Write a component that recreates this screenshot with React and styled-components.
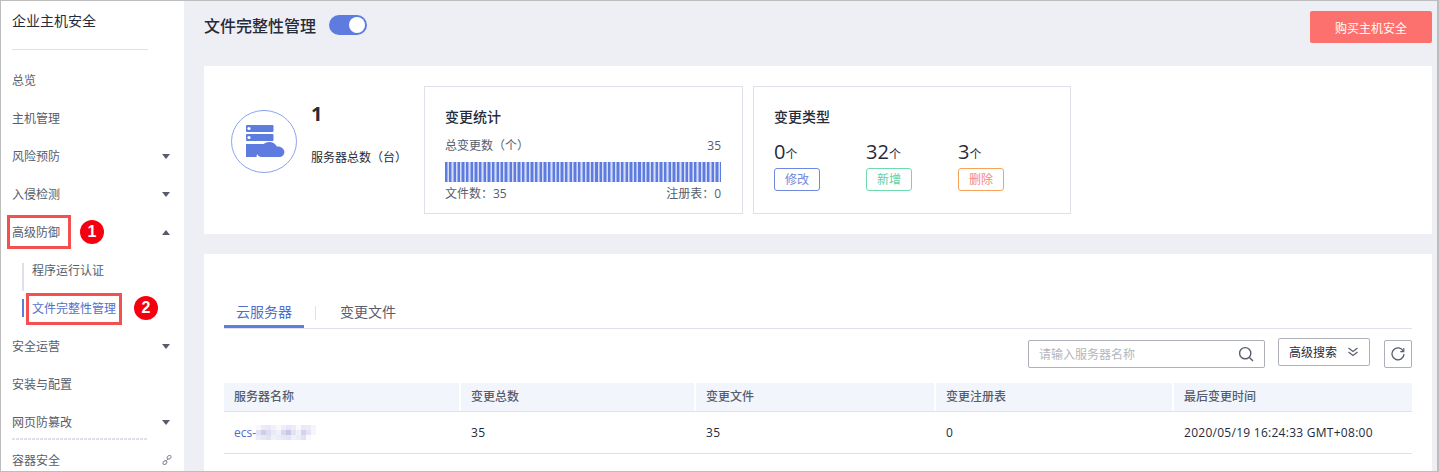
import React from "react";
import styled, { createGlobalStyle } from "styled-components";

const Global = createGlobalStyle`
  html, body { margin: 0; padding: 0; background: #fff; }
  body { font-family: "Open Sans", "Noto Sans CJK SC", sans-serif; font-size: 12px; color: #252b3a; }
  * { box-sizing: border-box; }
`;
const Frame = styled.div`
  position: relative; width: 1439px; height: 472px; border: 1px solid #bdbdbd; border-right-width: 2px; display: flex; overflow: hidden; background: #eeeff5;
`;
const Sidebar = styled.nav`
  width: 183px; flex: none; background: #fff; padding: 0 11px; display: flex; flex-direction: column; overflow: hidden;
`;
const Brand = styled.div`
  flex: none; height: 49px; padding-top: 10px; line-height: 20px; font-size: 14px; color: #252b3a; border-bottom: 1px solid #dfe1e8; width: 136px; margin-bottom: 11px;
`;
const MenuItem = styled.div`
  flex: none; height: 38px; display: flex; align-items: center; justify-content: space-between; padding-right: 3px; font-size: 12px; color: #575d6c; position: relative;
`;
const Caret = styled.span`
  width: 0; height: 0; border-left: 4px solid transparent; border-right: 4px solid transparent;
  ${p => p.$up ? "border-bottom: 5px solid #575d6c;" : "border-top: 5px solid #575d6c;"}
`;
const SubItem = styled.div`
  flex: none; height: 38px; margin-left: 10px; display: flex; align-items: center;
  padding-left: 10px; color: ${p => p.$active ? "#526ecc" : "#575d6c"}; position: relative;
  &::before {
    content: ""; position: absolute; left: 0; width: 2px;
    top: ${p => p.$active ? "10px" : "12px"};
    height: ${p => p.$active ? "18px" : "28px"};
    background: ${p => p.$active ? "#5e7ce0" : "#dfe1e8"};
  }
`;
const DashLine = styled.div`
  position: absolute; left: 11px; top: 437px; width: 136px; height: 2px;
  background: repeating-linear-gradient(90deg, #dfe1e8 0 3px, transparent 3px 4px);
`;
const Mark = styled.div`
  position: absolute; border: 3px solid #f4504f; pointer-events: none;
  left: ${p => p.$x}px; top: ${p => p.$y}px; width: ${p => p.$w}px; height: ${p => p.$h}px;
`;
const Badge = styled.div`
  position: absolute; left: ${p => p.$x}px; top: ${p => p.$y}px; width: 24px; height: 24px; border-radius: 50%; background: #f5000f; color: #fff;
  font: bold 16px/24px "Liberation Sans", sans-serif; text-align: center;
`;
const Main = styled.main`
  flex: 1; min-width: 0; padding: 0 5px 0 20px; display: flex; flex-direction: column; overflow: hidden;
`;
const Header = styled.header`
  flex: none; height: 65px; padding-top: 10px; display: flex; justify-content: space-between; align-items: flex-start;
`;
const TitleWrap = styled.div`
  display: flex; align-items: center; gap: 13px; height: 30px;
`;
const Title = styled.h1`
  margin: 0; font-size: 16px; font-weight: 500; color: #252b3a; line-height: 30px;
`;
const Toggle = styled.span`
  width: 38px; height: 20px; margin-top: -3px; border-radius: 10px; background: #5e7ce0; position: relative; display: block;
  &::after { content: ""; position: absolute; right: 2px; top: 2px; width: 16px; height: 16px; border-radius: 50%; background: #fff; }
`;
const BuyButton = styled.button`
  width: 122px; height: 32px; border: 0; border-radius: 2px; background: #fc716e; color: #fff; font: 12px "Noto Sans CJK SC", sans-serif;
`;
const Summary = styled.section`
  flex: none; height: 168px; background: #fff; padding: 20px 0 20px 27px; display: flex; margin-bottom: 20px;
`;
const ServerStat = styled.div`
  width: 193px; flex: none; display: flex; gap: 13px;
`;
const IconRing = styled.svg`
  margin-top: 24px; flex: none;
`;
const ServerText = styled.div`
  display: flex; flex-direction: column;
`;
const ServerCount = styled.div`
  font-weight: 700; font-size: 20px; line-height: 24px; height: 24px; margin-top: 16px; color: #252b3a;
`;
const ServerLabel = styled.div`
  margin-top: 23px; line-height: 18px; color: #252b3a; white-space: nowrap;
`;
const StatBox = styled.div`
  flex: none; width: ${p => p.$w}px; height: 128px; border: 1px solid #dfe1e8; margin-right: 10px; padding: 20px 21px 0 20px;
`;
const BoxTitle = styled.div`
  font-size: 14px; font-weight: 500; line-height: 20px; color: #252b3a;
`;
const Between = styled.div`
  display: flex; justify-content: space-between; line-height: 18px; color: #575d6c;
  margin-top: ${p => p.$top || 0}px;
`;
const Bar = styled.div`
  height: 20px; margin: 7px 0 3px;
  background: repeating-linear-gradient(90deg, #5e7ce0 0 2px, #9fb2ec 2px 2.6px, #d5dcf7 2.6px 3.6px, #9fb2ec 3.6px 4.3px);
`;
const TypeRow = styled.div`
  display: flex; margin-top: 13px;
`;
const TypeCol = styled.div`
  flex: none; width: 92px;
`;
const TypeNum = styled.div`
  font-size: 20px; line-height: 24px; color: #252b3a;
  span { font-size: 12px; color: #252b3a; }
`;
const TypeTag = styled.div`
  width: 46px; height: 23px; margin-top: 1px; border: 1px solid ${p => p.$c}; border-radius: 3px; color: ${p => p.$t}; text-align: center; line-height: 21px; font-size: 12px;
`;
const Panel = styled.section`
  flex: 1; background: #fff; padding: 45px 20px 0;
`;
const Tabs = styled.div`
  height: 30px; display: flex; align-items: flex-start; border-bottom: 1px solid #dfe1e8;
`;
const Tab = styled.div`
  height: 29px; line-height: 25px; font-size: 14px; color: ${p => p.$active ? "#526ecc" : "#575d6c"};
  ${p => p.$active ? "width: 80px; text-align: center; border-bottom: 3px solid #5e7ce0;" : "margin-left: 24px;"}
`;
const TabSep = styled.span`
  width: 1px; height: 14px; margin: 7px 0 0 11px; background: #dfe1e8;
`;
const Tools = styled.div`
  height: 54px; display: flex; justify-content: flex-end; align-items: flex-start; padding-top: 9px;
`;
const Search = styled.div`
  width: 237px; height: 28px; margin-top: 2px; border: 1px solid #adb0b8; border-radius: 2px; display: flex; align-items: center; justify-content: space-between; padding: 0 10px; color: #b3b6bd;
`;
const AdvButton = styled.div`
  width: 92px; height: 28px; margin-left: 13px; border: 1px solid #adb0b8; border-radius: 2px; display: flex; align-items: center; justify-content: center; gap: 10px; color: #252b3a;
`;
const RefreshButton = styled.div`
  width: 28px; height: 28px; margin: 2px 0 0 14px; border: 1px solid #adb0b8; border-radius: 2px; display: flex; align-items: center; justify-content: center;
`;
const Row = styled.div`
  display: grid; grid-template-columns: 237px 235px 240px 238px 1fr; align-items: center;
`;
const HeadRow = styled(Row)`
  height: 29px; background: #f3f5fc; border-bottom: 1px solid #dfe1e8;
`;
const HeadCell = styled.div`
  height: 28px; padding-left: 10px; line-height: 28px; color: #575d6c; font-weight: 500; border-left: ${p => p.$first ? "0" : "2px solid #fff"};
  margin-left: ${p => p.$first ? "0" : "-2px"};
`;
const BodyRow = styled(Row)`
  height: 42px; border-bottom: 1px solid #dfe1e8; color: #252b3a;
`;
const Cell = styled.div`
  padding-left: 10px; white-space: nowrap; letter-spacing: ${p => p.$wide ? "0.27px" : "0"};
`;
const Link = styled.span`
  color: #526ecc; display: inline-flex; align-items: center;
`;
const Blur = styled.svg`
  display: block;
`;
const MenuLinkIcon = styled.svg`
  margin-right: -2px;
`;

const Search16 = () => (
  <svg width="16" height="16" viewBox="0 0 16 16" fill="none" stroke="#575d6c" strokeWidth="1.4"><circle cx="7.2" cy="7.2" r="5.6" /><path d="M11.4 11.4 15 15" /></svg>
);
const DoubleDown = () => (
  <svg width="12" height="10" viewBox="0 0 12 10" fill="none" stroke="#575d6c" strokeWidth="1.2"><path d="M1.5 1 6 4.5 10.5 1M1.5 5 6 8.5 10.5 5" /></svg>
);
const Refresh = () => (
  <svg width="14" height="14" viewBox="0 0 14 14" fill="none" stroke="#575d6c" strokeWidth="1.3"><path d="M12.4 4.2A6 6 0 1 0 13 7" /><path d="M12.8 1v3.6H9.3" strokeWidth="1.1" /></svg>
);
const LinkIcon = () => (
  <MenuLinkIcon width="10" height="10" viewBox="0 0 10 10" fill="none" stroke="#8a8e99" strokeWidth="1"><rect x="5" y=".8" width="4.2" height="3" rx="1.5" transform="rotate(-45 7 2.3)" /><rect x=".8" y="6" width="4.2" height="3" rx="1.5" transform="rotate(-45 3 7.5)" /><path d="M3.8 6.2 6.2 3.8" /></MenuLinkIcon>
);
const ServerIcon = () => (
  <IconRing width="67" height="64" viewBox="0 0 67 64">
    <ellipse cx="33" cy="31.5" rx="32.5" ry="31" fill="#fff" stroke="#8ca3ec" strokeWidth="1" />
    <g fill="#5e7ce0">
      <rect x="15" y="15" width="27.5" height="7" rx="1" />
      <rect x="15" y="24" width="27.5" height="7" rx="1" />
      <path d="M15 34h27.500v.5c-6 .5-10.500 3.500-12 6.500-3 .5-5 3-5 6H15Z" />
      <path d="M31 47a5 5 0 0 1-.6-10c1.500-3.500 5-5 8-5 3.500 0 6 2 7.500 4.500 4-.5 7.500 2.500 7.500 5.500S51 47 48 47Z" />
    </g>
    <circle cx="18" cy="18.500" r="1.600" fill="#fff" /><circle cx="18" cy="27.500" r="1.600" fill="#fff" />
  </IconRing>
);

const menuTop = ["总览", "主机管理"];
const columns = ["服务器名称", "变更总数", "变更文件", "变更注册表", "最后变更时间"];
const blurRows = [
  ["#f8f8fd", "#ecebf8", "#e8e8f6", "#f0f0fa", "#f8f8fd", "#eeeef9", "#e6e6f6", "#ecebf8", "#f8f8fd", "#e8eaf6", "#ecebf8", "#f4f4fb"],
  ["#e2e2f4", "#cfcce8", "#dedcf1", "#eaeaf7", "#f0f0fa", "#d9d7ef", "#c9c6e5", "#e2e2f3", "#f0f0fa", "#d3d3ec", "#e4e4f4", "#f6f6fc"],
  ["#ecebf8", "#e8e7f6", "#e2e2f4", "#f0f0fa", "#ecebf8", "#e7e7f5", "#e4e4f4", "#f0f0fa", "#ecebf8", "#e2e2f4", "#f8f8fd", "#ffffff"],
];

export default function App() {
  return (
    <>
      <Global />
      <Frame>
        <Sidebar>
          <Brand>企业主机安全</Brand>
          {menuTop.map(m => <MenuItem key={m}>{m}</MenuItem>)}
          <MenuItem>风险预防<Caret /></MenuItem>
          <MenuItem>入侵检测<Caret /></MenuItem>
          <MenuItem>高级防御<Caret $up /></MenuItem>
          <SubItem>程序运行认证</SubItem>
          <SubItem $active>文件完整性管理</SubItem>
          <MenuItem>安全运营<Caret /></MenuItem>
          <MenuItem>安装与配置</MenuItem>
          <MenuItem>网页防篡改<Caret /></MenuItem>
          <MenuItem>容器安全<LinkIcon /></MenuItem>
        </Sidebar>
        <DashLine />
        <Main>
          <Header>
            <TitleWrap><Title>文件完整性管理</Title><Toggle /></TitleWrap>
            <BuyButton>购买主机安全</BuyButton>
          </Header>
          <Summary>
            <ServerStat>
              <ServerIcon />
              <ServerText>
                <ServerCount>1</ServerCount>
                <ServerLabel>服务器总数（台）</ServerLabel>
              </ServerText>
            </ServerStat>
            <StatBox $w={319}>
              <BoxTitle>变更统计</BoxTitle>
              <Between $top={10}><span>总变更数（个）</span><span>35</span></Between>
              <Bar />
              <Between><span>文件数：35</span><span>注册表：0</span></Between>
            </StatBox>
            <StatBox $w={318}>
              <BoxTitle>变更类型</BoxTitle>
              <TypeRow>
                <TypeCol><TypeNum>0<span>个</span></TypeNum><TypeTag $c="#6f88e2" $t="#6f88e2">修改</TypeTag></TypeCol>
                <TypeCol><TypeNum>32<span>个</span></TypeNum><TypeTag $c="#6fd9b0" $t="#5fcfa4">新增</TypeTag></TypeCol>
                <TypeCol><TypeNum>3<span>个</span></TypeNum><TypeTag $c="#f7a35c" $t="#f48a74">删除</TypeTag></TypeCol>
              </TypeRow>
            </StatBox>
          </Summary>
          <Panel>
            <Tabs>
              <Tab $active>云服务器</Tab>
              <TabSep />
              <Tab>变更文件</Tab>
            </Tabs>
            <Tools>
              <Search><span>请输入服务器名称</span><Search16 /></Search>
              <AdvButton>高级搜索<DoubleDown /></AdvButton>
              <RefreshButton><Refresh /></RefreshButton>
            </Tools>
            <HeadRow>
              {columns.map((c, i) => <HeadCell key={c} $first={i === 0}>{c}</HeadCell>)}
            </HeadRow>
            <BodyRow>
              <Cell>
                <Link>ecs-
                  <Blur width="60" height="15" viewBox="0 0 60 15">
                    {blurRows.map((row, r) => row.map((c, i) => <rect key={`${r}-${i}`} x={i * 5} y={r * 5} width="5" height="5" fill={c} />))}
                  </Blur>
                </Link>
              </Cell>
              <Cell $wide>35</Cell>
              <Cell $wide>35</Cell>
              <Cell $wide>0</Cell>
              <Cell $wide>2020/05/19 16:24:33 GMT+08:00</Cell>
            </BodyRow>
          </Panel>
        </Main>
        <Mark $x={6} $y={214} $w={64} $h={34} />
        <Mark $x={25} $y={292} $w={96} $h={32} />
        <Badge $x={79} $y={219}>1</Badge>
        <Badge $x={133} $y={295}>2</Badge>
      </Frame>
    </>
  );
}
